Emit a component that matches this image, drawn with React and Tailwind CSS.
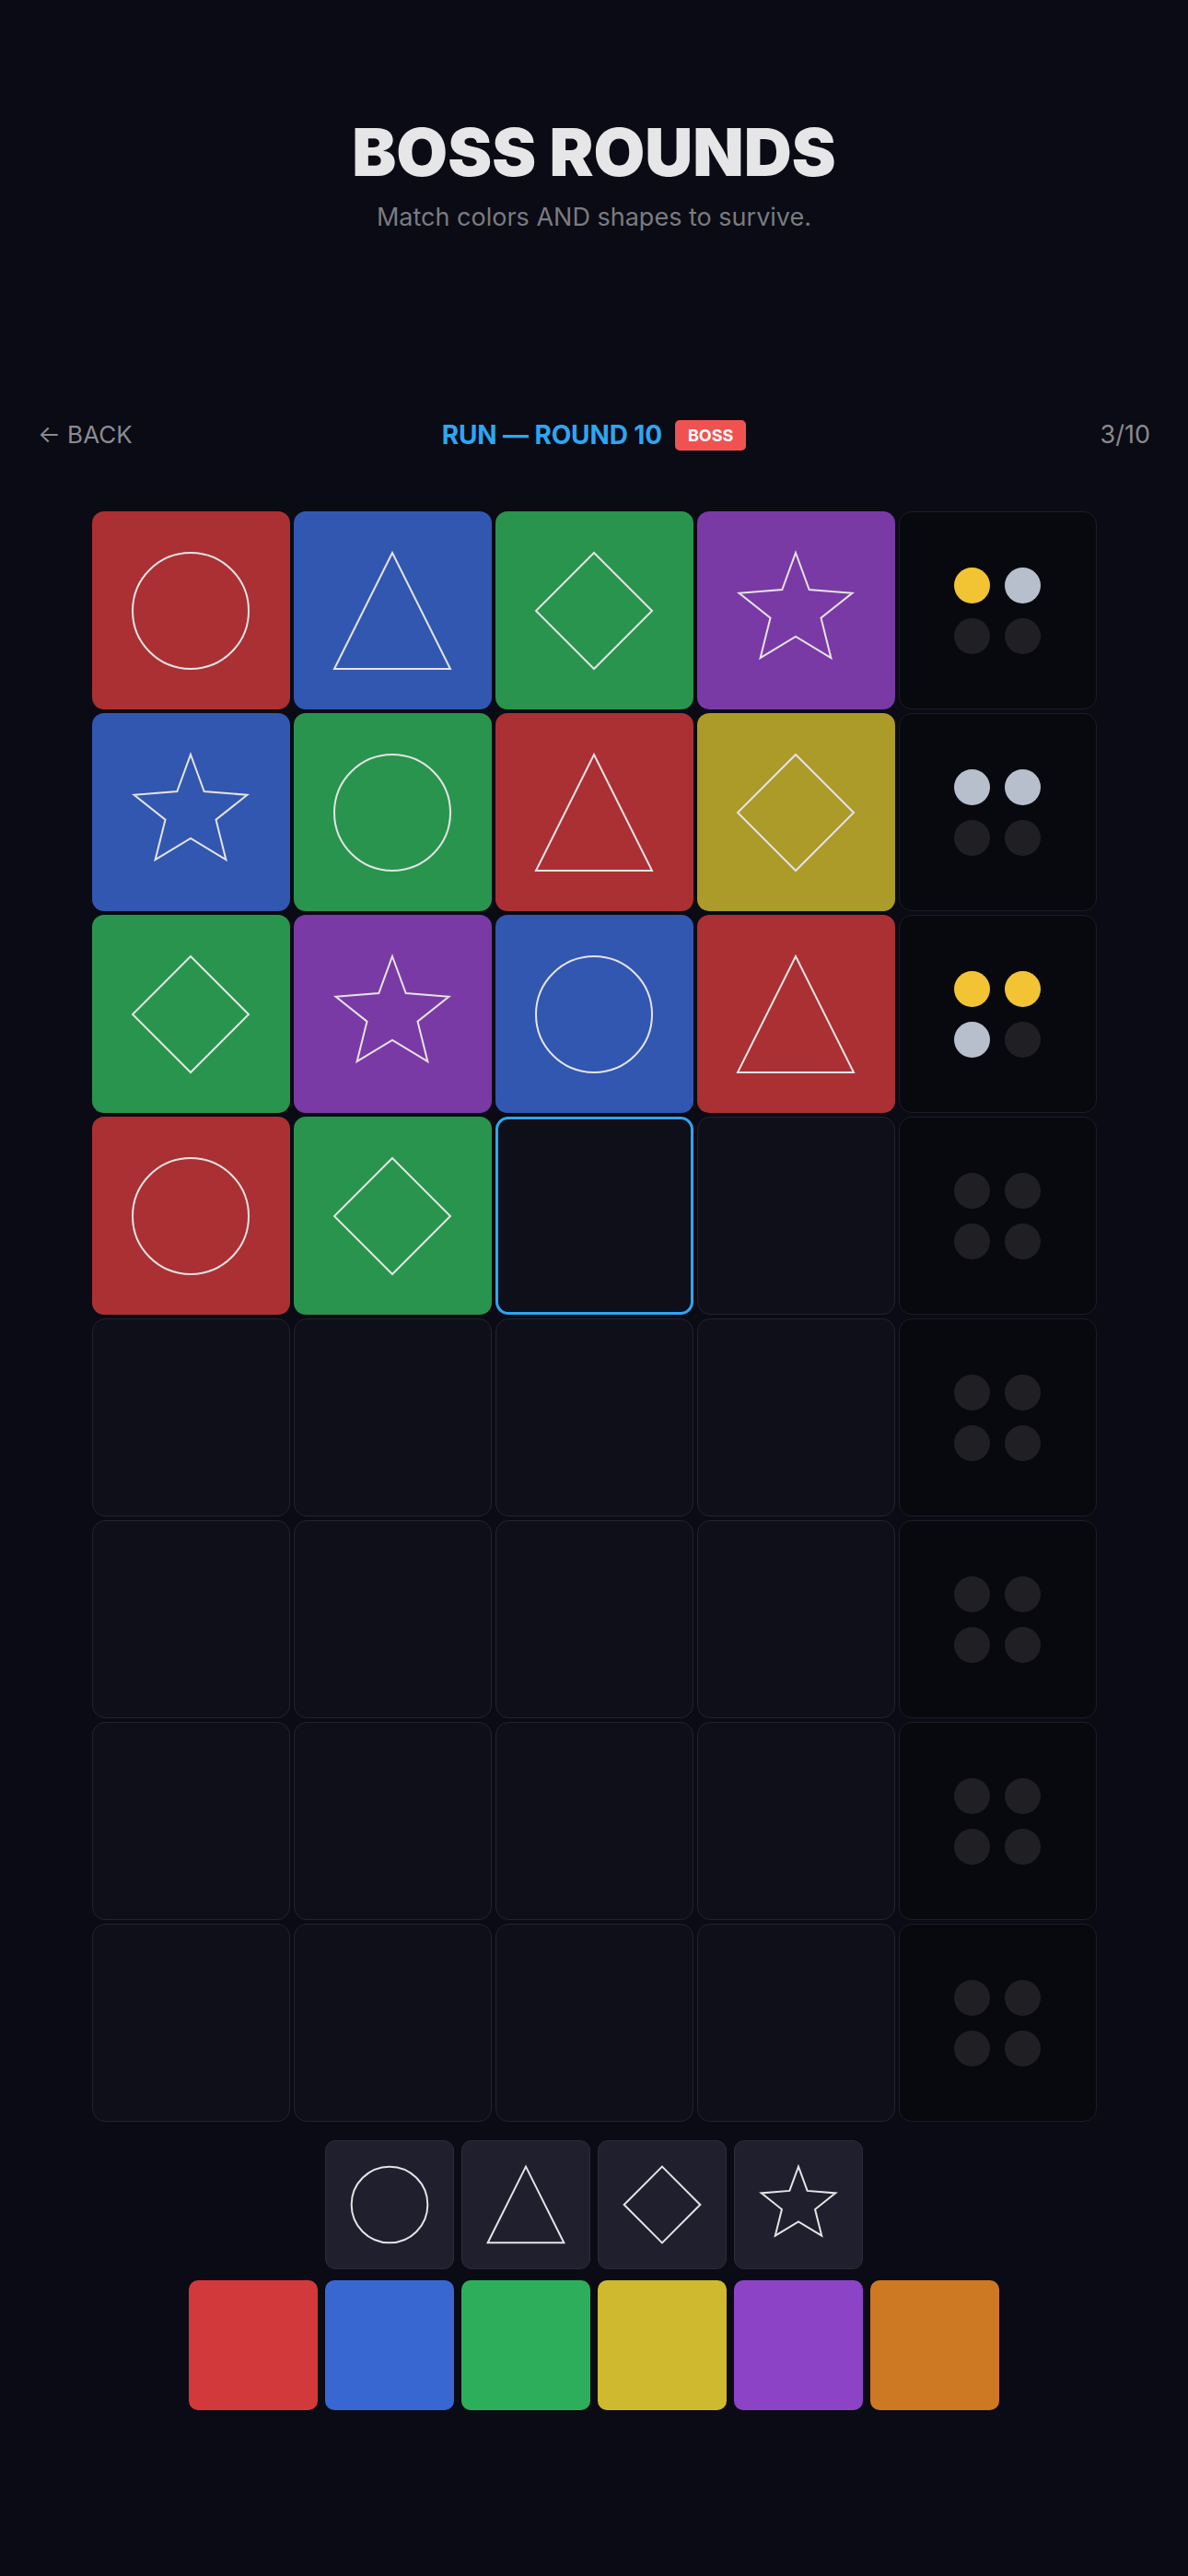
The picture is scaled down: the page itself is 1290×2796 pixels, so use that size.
import React from "react";

const FILL = {
  red: "bg-[#ab3033]",
  blue: "bg-[#3257b1]",
  green: "bg-[#29944d]",
  purple: "bg-[#7a3aa5]",
  yellow: "bg-[#ac9a29]",
};

const DOT = {
  y: "bg-[#f2c433]",
  g: "bg-[#b8bfcc]",
  d: "bg-[#1f1f24]",
};

function Shape({ type, size = 128 }) {
  const common = {
    fill: "none",
    stroke: "#e4e4e6",
    strokeWidth: 2,
    vectorEffect: "non-scaling-stroke",
    strokeLinejoin: "miter",
  };
  return (
    <svg width={size} height={size} viewBox="0 0 128 128" className="block overflow-visible">
      {type === "circle" && <circle cx="64" cy="64" r="63" {...common} />}
      {type === "triangle" && <polygon points="64,1 1,127 127,127" {...common} />}
      {type === "diamond" && <polygon points="64,1 127,64 64,127 1,64" {...common} />}
      {type === "star" && (
        <polygon
          points="64,1 78.7,41 125.4,44.8 91.5,71.7 102.4,115.2 64,92 25.6,115.2 36.5,71.7 2.6,44.8 49.3,41"
          {...common}
        />
      )}
    </svg>
  );
}

const rows = [
  { cells: [["red", "circle"], ["blue", "triangle"], ["green", "diamond"], ["purple", "star"]], fb: ["y", "g", "d", "d"] },
  { cells: [["blue", "star"], ["green", "circle"], ["red", "triangle"], ["yellow", "diamond"]], fb: ["g", "g", "d", "d"] },
  { cells: [["green", "diamond"], ["purple", "star"], ["blue", "circle"], ["red", "triangle"]], fb: ["y", "y", "g", "d"] },
  { cells: [["red", "circle"], ["green", "diamond"], "active", null], fb: ["d", "d", "d", "d"] },
  { cells: [null, null, null, null], fb: ["d", "d", "d", "d"] },
  { cells: [null, null, null, null], fb: ["d", "d", "d", "d"] },
  { cells: [null, null, null, null], fb: ["d", "d", "d", "d"] },
  { cells: [null, null, null, null], fb: ["d", "d", "d", "d"] },
];

function Cell({ c }) {
  if (c === "active") {
    return <div className="rounded-[14px] border-[3px] border-[#2ea6f2] bg-[#0e0f19]" />;
  }
  if (!c) {
    return <div className="rounded-[14px] border border-[#22232c] bg-[#0e0f19]" />;
  }
  return (
    <div className={`rounded-[13px] ${FILL[c[0]]} flex items-center justify-center`}>
      <Shape type={c[1]} />
    </div>
  );
}

function Feedback({ fb }) {
  return (
    <div className="rounded-[14px] border border-[#1c1d25] bg-[#08090f] flex items-center justify-center">
      <div className="grid grid-cols-2 gap-[16px]">
        {fb.map((d, i) => (
          <div key={i} className={`w-[39px] h-[39px] rounded-full ${DOT[d]}`} />
        ))}
      </div>
    </div>
  );
}

export default function App() {
  return (
    <div
      className="min-h-[2796px] w-full bg-[#0a0b14] flex flex-col items-center"
      style={{ fontFamily: "Inter, 'Liberation Sans', sans-serif" }}
    >
      <div className="pt-[130px] flex flex-col items-center">
        <h1 className="text-[72px] leading-[70px] font-black text-[#e6e6e8]">BOSS ROUNDS</h1>
        <p className="mt-[18px] text-[27px] leading-[36px] text-[#7b7b80]">Match colors AND shapes to survive.</p>
      </div>

      <div className="mt-[200px] w-full px-[41px] flex items-center h-[36px]">
        <div className="flex-1 basis-0 text-[26px] leading-[36px] text-[#8a8a90]">← BACK</div>
        <div className="flex items-center">
          <span className="text-[28px] leading-[36px] font-bold tracking-[-0.005em] text-[#2ea6f2]">RUN — ROUND 10</span>
          <span className="ml-[14px] h-[33px] px-[14px] rounded-[5px] bg-[#f05252] text-white text-[18px] font-bold flex items-center">
            BOSS
          </span>
        </div>
        <div className="flex-1 basis-0 text-right text-[27px] leading-[36px] text-[#8a8a90]">3/10</div>
      </div>

      <div className="mt-[65px] grid grid-cols-[repeat(5,215px)] auto-rows-[215px] gap-[4px]">
        {rows.map((r, ri) => (
          <React.Fragment key={ri}>
            {r.cells.map((c, ci) => (
              <Cell key={ci} c={c} />
            ))}
            <Feedback fb={r.fb} />
          </React.Fragment>
        ))}
      </div>

      <div className="mt-[20px] flex gap-[8px]">
        {["circle", "triangle", "diamond", "star"].map((s) => (
          <div
            key={s}
            className="w-[140px] h-[140px] rounded-[11px] border border-[#2b2c3a] bg-[#1f1f2e] flex items-center justify-center"
          >
            <Shape type={s} size={84} />
          </div>
        ))}
      </div>

      <div className="mt-[12px] flex gap-[8px]">
        <div className="w-[140px] h-[141px] rounded-[10px] bg-[#d1393a]" />
        <div className="w-[140px] h-[141px] rounded-[10px] bg-[#3867d1]" />
        <div className="w-[140px] h-[141px] rounded-[10px] bg-[#2dae5b]" />
        <div className="w-[140px] h-[141px] rounded-[10px] bg-[#cfb92f]" />
        <div className="w-[140px] h-[141px] rounded-[10px] bg-[#8d43c6]" />
        <div className="w-[140px] h-[141px] rounded-[10px] bg-[#cd7823]" />
      </div>
    </div>
  );
}
